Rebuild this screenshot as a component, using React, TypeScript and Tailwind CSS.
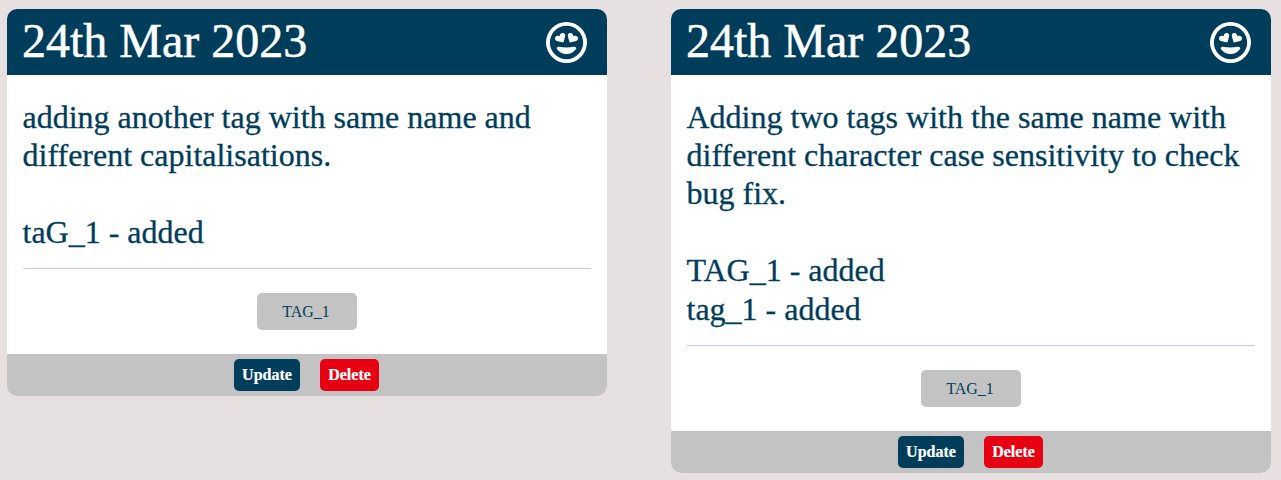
import { FaRegFaceGrinHearts } from "react-icons/fa6";

type Entry = { date: string; lines: string[]; tag: string };

const entries: Entry[] = [
  {
    date: "24th Mar 2023",
    lines: ["adding another tag with same name and different capitalisations.", "", "taG_1 - added"],
    tag: "TAG_1",
  },
  {
    date: "24th Mar 2023",
    lines: [
      "Adding two tags with the same name with different character case sensitivity to check bug fix.",
      "",
      "TAG_1 - added",
      "tag_1 - added",
    ],
    tag: "TAG_1",
  },
];

function Card({ entry }: { entry: Entry }) {
  return (
    <article className="w-[600px] shrink-0 overflow-hidden rounded-[10px] bg-white">
      <header className="flex h-[66px] items-center justify-between bg-[#003d5b] pr-5 pl-[15px] text-white">
        <h2 className="h-[66px] text-[48px] leading-[64px] [-webkit-text-stroke:0.5px]">{entry.date}</h2>
        <FaRegFaceGrinHearts className="size-[41px]" />
      </header>
      <div className="px-4 pt-[22.65px]">
        <div className="border-b border-[#bfced6] pb-[17.15px] text-[32px] leading-[38.4px] whitespace-pre-wrap [-webkit-text-stroke:0.3px]">
          <p className="-ml-[0.5px]">{entry.lines.join("\n")}</p>
        </div>
        <div className="flex justify-center py-6">
          <span className="h-[37px] w-[100px] rounded-[5px] bg-[#c3c3c3] pr-0.5 text-center text-base leading-[37px]">
            {entry.tag}
          </span>
        </div>
      </div>
      <footer className="flex h-[42px] items-center justify-center gap-5 bg-[#c3c3c3] pr-px text-base font-bold text-white [-webkit-text-stroke:0.2px]">
        <button className="h-8 w-[66px] rounded-[5px] bg-[#003d5b]">Update</button>
        <button className="h-8 w-[59px] rounded-[5px] bg-[#e60012]">Delete</button>
      </footer>
    </article>
  );
}

export default function App() {
  return (
    <main className="flex h-[480px] items-start gap-16 overflow-hidden bg-[#e6e0e0] pt-[9px] pl-[7px] font-['Liberation_Serif',serif] text-[#003d5b]">
      {entries.map((entry, i) => (
        <Card key={i} entry={entry} />
      ))}
    </main>
  );
}
